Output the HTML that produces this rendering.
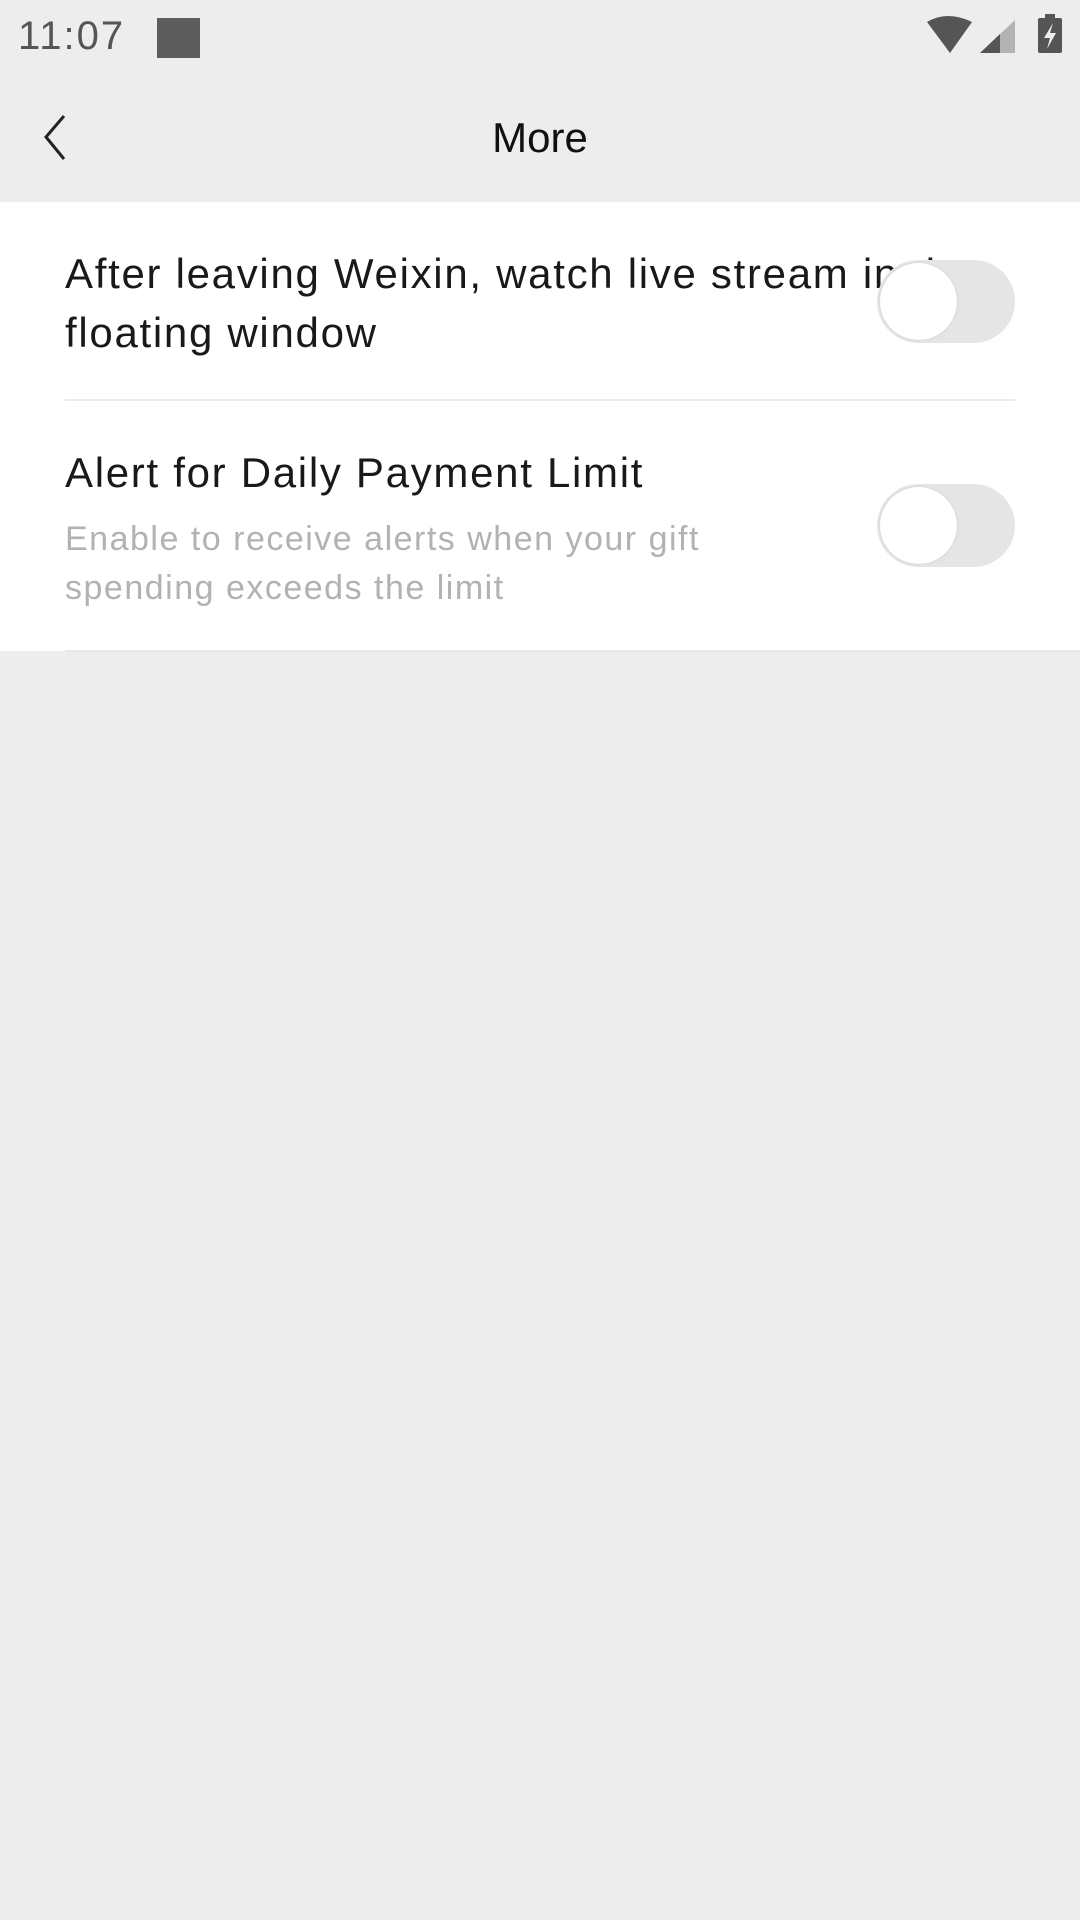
<!DOCTYPE html>
<html><head><meta charset="utf-8">
<style>
html,body{margin:0;padding:0}
body{width:1080px;height:1920px;background:#ededed;position:relative;overflow:hidden;font-family:"Liberation Sans",sans-serif}
.abs{position:absolute}
.time{left:18px;top:14px;font-size:40px;color:#555;letter-spacing:2px}
.title{left:0;width:1080px;top:114px;text-align:center;font-size:42px;color:#111}
.white{left:0;top:202px;width:1080px;height:449px;background:#fff}
.t{font-size:42px;color:#191919;line-height:59px;left:65px;letter-spacing:1.7px;white-space:nowrap}
.s{font-size:34px;color:#b2b2b2;line-height:49px;left:65px;letter-spacing:1.5px;white-space:nowrap}
.div{height:2px;background:#ececec;left:65px;width:950px}
.tg{width:138px;height:83px;border-radius:42px;background:#e5e5e5;left:877px}
.tg::after{content:"";position:absolute;left:3px;top:3px;width:77px;height:77px;border-radius:50%;background:#fff;box-shadow:0 0 2px rgba(0,0,0,.15)}
</style></head><body>
<div class="abs time">11:07</div>
<div class="abs" style="left:157px;top:18px;width:43px;height:40px;background:#5d5d5d"></div>
<svg class="abs" style="left:920px;top:12px" width="150" height="48" viewBox="0 0 150 48">
<path d="M7 10 Q27 -2 52 10 L30 41 Z" fill="#555"/>
<path d="M60 41 L95 8 L95 41 Z" fill="#b3b3b3"/>
<path d="M60 41 L80 22 L80 41 Z" fill="#555"/>
<rect x="118" y="6" width="24" height="35" rx="2" fill="#555"/>
<rect x="125" y="2" width="10" height="5" fill="#555"/>
<path d="M133 11 L124 26 L130 26 L127 37 L136 21 L130 21 Z" fill="#eee"/>
</svg>
<svg class="abs" style="left:38px;top:112px" width="34" height="52" viewBox="0 0 34 52">
<path d="M26 4 L8 25 L26 47" fill="none" stroke="#222" stroke-width="3"/>
</svg>
<div class="abs title">More</div>
<div class="abs white"></div>
<div class="abs t" style="top:244px">After leaving Weixin, watch live stream in the<br>floating window</div>
<div class="abs tg" style="top:260px"></div>
<div class="abs div" style="top:399px"></div>
<div class="abs t" style="top:443px">Alert for Daily Payment Limit</div>
<div class="abs s" style="top:515px">Enable to receive alerts when your gift<br>spending exceeds the limit</div>
<div class="abs tg" style="top:484px"></div>
<div class="abs div" style="top:650px;width:1015px;background:#e6e6e6"></div>
</body></html>
